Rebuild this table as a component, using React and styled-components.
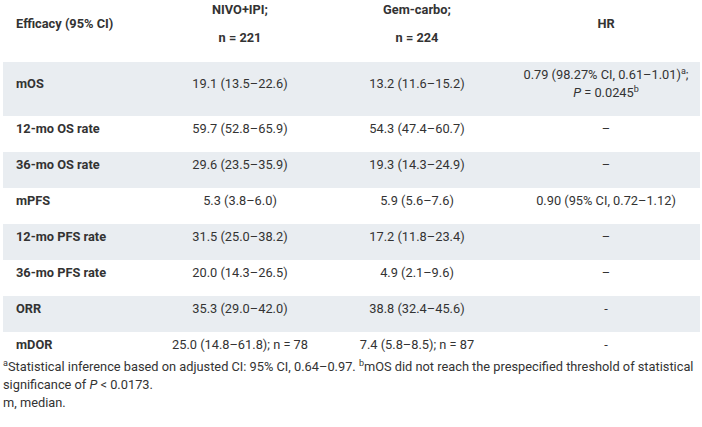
import React from "react";
import styled, { createGlobalStyle } from "styled-components";

const GlobalStyle = createGlobalStyle`
  html, body {
    margin: 0;
    padding: 0;
    background: #ffffff;
  }
  body {
    font-family: Roboto, "Liberation Sans", Arial, sans-serif;
    font-size: 12.8px;
    color: #333333;
  }
`;

const Page = styled.div`
  padding: 0 2px 0 3px;
  width: 697px;
`;

const Table = styled.table`
  width: 697px;
  border-collapse: collapse;
  table-layout: fixed;
`;

const Col = styled.col`
  width: ${(p) => p.$w}px;
`;

const HeadCell = styled.th`
  padding: ${(p) => (p.$align === "left" ? "1px 4px 5px 13px" : "1px 4px 5px")};
  font-weight: 700;
  text-align: ${(p) => p.$align || "center"};
  vertical-align: middle;
  line-height: 18px;
`;

const Row = styled.tr`
  background: ${(p) => (p.$shaded ? "#e9edf1" : "transparent")};
`;

const Cell = styled.td`
  padding: ${(p) => (p.$align === "left" ? "4px 4px 4px 13px" : "4px")};
  text-align: ${(p) => p.$align || "center"};
  font-weight: ${(p) => (p.$bold ? 700 : 400)};
  vertical-align: middle;
  line-height: 18px;
`;

const Para = styled.p`
  margin: 0 0 ${(p) => (p.$last ? 0 : 10)}px;
  white-space: ${(p) => (p.$nowrap ? "nowrap" : "normal")};
`;

const Sup = styled.sup`
  font-size: 9px;
  line-height: 0;
  vertical-align: 5px;
`;

const Notes = styled.div`
  line-height: 18px;
`;

const Note = styled.p`
  margin: 0;
`;

const rows = [
  { label: "mOS", a: "19.1 (13.5–22.6)", b: "13.2 (11.6–15.2)", hr: "mos" },
  { label: "12-mo OS rate", a: "59.7 (52.8–65.9)", b: "54.3 (47.4–60.7)", hr: "–" },
  { label: "36-mo OS rate", a: "29.6 (23.5–35.9)", b: "19.3 (14.3–24.9)", hr: "–" },
  { label: "mPFS", a: "5.3 (3.8–6.0)", b: "5.9 (5.6–7.6)", hr: "0.90 (95% CI, 0.72–1.12)" },
  { label: "12-mo PFS rate", a: "31.5 (25.0–38.2)", b: "17.2 (11.8–23.4)", hr: "–" },
  { label: "36-mo PFS rate", a: "20.0 (14.3–26.5)", b: "4.9 (2.1–9.6)", hr: "–" },
  { label: "ORR", a: "35.3 (29.0–42.0)", b: "38.8 (32.4–45.6)", hr: "-" },
  { label: "mDOR", a: "25.0 (14.8–61.8); n = 78", b: "7.4 (5.8–8.5); n = 87", hr: "-" },
];

export default function App() {
  return (
    <>
      <GlobalStyle />
      <Page>
        <Table>
          <colgroup>
            <Col $w={155} />
            <Col $w={164} />
            <Col $w={190} />
            <Col $w={188} />
          </colgroup>
          <thead>
            <tr>
              <HeadCell $align="left">
                <Para>Efficacy (95% CI)</Para>
              </HeadCell>
              <HeadCell>
                <Para>NIVO+IPI;</Para>
                <Para>n = 221</Para>
              </HeadCell>
              <HeadCell>
                <Para>Gem-carbo;</Para>
                <Para>n = 224</Para>
              </HeadCell>
              <HeadCell>
                <Para>HR</Para>
              </HeadCell>
            </tr>
          </thead>
          <tbody>
            {rows.map((r, i) => {
              const last = i === rows.length - 1;
              return (
                <Row key={r.label} $shaded={i % 2 === 0}>
                  <Cell $align="left" $bold>
                    <Para $last={last}>{r.label}</Para>
                  </Cell>
                  <Cell>
                    <Para $last={last} $nowrap>{r.a}</Para>
                  </Cell>
                  <Cell>
                    <Para $last={last} $nowrap>{r.b}</Para>
                  </Cell>
                  <Cell>
                    {r.hr === "mos" ? (
                      <Para $last={last} $nowrap>
                        0.79 (98.27% CI, 0.61–1.01)<Sup>a</Sup>;
                        <br />
                        <i>P</i> = 0.0245<Sup>b</Sup>
                      </Para>
                    ) : (
                      <Para $last={last} $nowrap>{r.hr}</Para>
                    )}
                  </Cell>
                </Row>
              );
            })}
          </tbody>
        </Table>
        <Notes>
          <Note>
            <Sup>a</Sup>Statistical inference based on adjusted CI: 95% CI, 0.64–0.97.{" "}
            <Sup>b</Sup>mOS did not reach the prespecified threshold of statistical
            significance of <i>P</i>&nbsp;&lt; 0.0173.
          </Note>
          <Note>m, median.</Note>
        </Notes>
      </Page>
    </>
  );
}
